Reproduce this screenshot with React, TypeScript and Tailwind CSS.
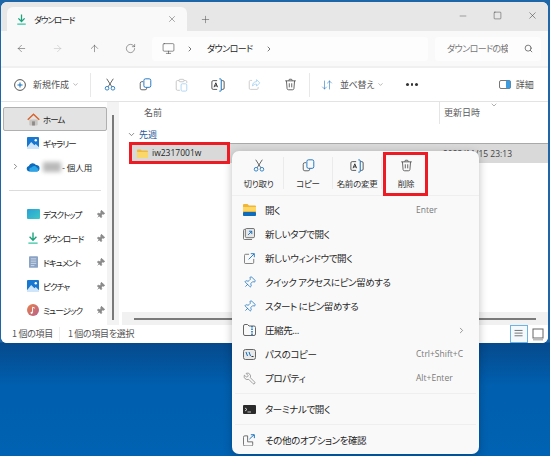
import { ArrowDownUp, ArrowLeft, ArrowRight, ArrowUp, ChevronDown, ChevronRight, Minus, Monitor, Pin, Plus, RotateCw, Search, Square, Wrench, X } from 'lucide-react'
import type { ReactNode } from 'react'

const jp = "font-['Noto_Sans_CJK_JP','Noto_Sans',sans-serif] [font-feature-settings:'palt'] whitespace-nowrap"

function ScissorsIcon({ size = 16 }: { size?: number }) {
  return (
    <svg width={size} height={size * 1.1} viewBox="0 0 16 18" fill="none" strokeWidth="1.1">
      <path d="M3.5 1 10.6 12M12.5 1 5.4 12" stroke="#444" />
      <circle cx="4" cy="14" r="2.5" stroke="#0f6cbd" />
      <circle cx="12" cy="14" r="2.5" stroke="#0f6cbd" />
    </svg>
  )
}

function CopyIcon({ size = 16 }: { size?: number }) {
  return (
    <svg width={size} height={size} viewBox="0 0 16 16" fill="none" strokeWidth="1.1">
      <path d="M5 4.5H3.5A2 2 0 0 0 1.5 6.5v6a2 2 0 0 0 2 2h4a2 2 0 0 0 2-2V12" stroke="#555" />
      <rect x="6" y="1" width="8.5" height="10.5" rx="2" stroke="#0f6cbd" />
    </svg>
  )
}

function PasteIcon() {
  return (
    <svg width="13" height="14" viewBox="0 0 16 17" fill="none" strokeWidth="1.1">
      <path d="M5 3H3a1.5 1.5 0 0 0-1.5 1.5v9A1.5 1.5 0 0 0 3 15h3" stroke="#c4c4c4" />
      <path d="M11 3h2a1.5 1.5 0 0 1 1.5 1.5V6" stroke="#c4c4c4" />
      <rect x="5" y="1.5" width="6" height="3" rx="1" stroke="#c4c4c4" />
      <rect x="7.5" y="7" width="7" height="9" rx="1.5" stroke="#a9d3f2" />
    </svg>
  )
}

function RenameIcon({ size = 16 }: { size?: number }) {
  return (
    <svg width={size} height={size} viewBox="0 0 16 16" fill="none" strokeWidth="1.1">
      <path d="M7 3H2.5a1.5 1.5 0 0 0-1.5 1.5v7A1.5 1.5 0 0 0 2.5 13H7M12 3h1.5A1.5 1.5 0 0 1 15 4.500v7a1.500 1.500 0 0 1-1.500 1.500H12" stroke="#555" />
      <path d="M3.500 10.500 5.500 5.500l2 5M4.200 9h2.600" stroke="#333" />
      <path d="M9.500 1h1.200a1 1 0 0 1 1 1v12a1 1 0 0 1-1 1H9.500" stroke="#0f6cbd" />
    </svg>
  )
}

function ShareIcon() {
  return (
    <svg width="13" height="13" viewBox="0 0 16 16" fill="none" strokeWidth="1.1">
      <path d="M5 3H3a1.500 1.500 0 0 0-1.500 1.500v8A1.500 1.500 0 0 0 3 14h8a1.500 1.500 0 0 0 1.500-1.500V11" stroke="#c8c8c8" />
      <path d="M14.500 6 10.500 2v2.500C7.500 4.500 5.500 6.500 5.500 10c1.200-2 2.800-2.500 5-2.500V10z" stroke="#a9d3f2" />
    </svg>
  )
}

function TrashIcon({ size = 16 }: { size?: number }) {
  return (
    <svg width={size} height={size} viewBox="0 0 16 16" fill="none" stroke="#555" strokeWidth="1.100">
      <path d="M1.500 3.500h13M6 3.500V2.800A1.300 1.300 0 0 1 7.300 1.500h1.400A1.300 1.300 0 0 1 10 2.800v.7" />
      <path d="M3 3.500 3.800 13a1.800 1.800 0 0 0 1.800 1.500h4.800A1.800 1.800 0 0 0 12.200 13l.8-9.500" />
      <path d="M6.500 6.500v5M9.500 6.500v5" />
    </svg>
  )
}

function DownloadIcon({ size = 13 }: { size?: number }) {
  return (
    <svg width={size} height={size} viewBox="0 0 13 13" fill="none" stroke="#1aa37a" strokeWidth="1.500">
      <path d="M6.500 .5v8M2.800 5.200l3.700 3.700 3.700-3.700" />
      <path d="M1.500 12h10" stroke="#35c5a0" />
    </svg>
  )
}

function FolderIcon({ size = 14 }: { size?: number }) {
  return (
    <svg width={size} height={size * 0.85} viewBox="0 0 14 12">
      <path d="M0 1.500A1 1 0 0 1 1 .5h3.500l1.500 1.500h7a1 1 0 0 1 1 1V11a1 1 0 0 1-1 1H1a1 1 0 0 1-1-1z" fill="#f0b93a" />
      <path d="M0 4h14v7a1 1 0 0 1-1 1H1a1 1 0 0 1-1-1z" fill="#fbd76a" />
    </svg>
  )
}

function HomeIcon() {
  return (
    <svg width="13" height="13" viewBox="0 0 14 14" fill="none">
      <path d="M2.500 7v5.500a1 1 0 0 0 1 1h7a1 1 0 0 0 1-1V7z" fill="#c9c5c2" />
      <rect x="5.500" y="9" width="3" height="4.500" fill="#8d8a88" />
      <path d="M.8 7.200 7 1.300l6.200 5.900" stroke="#d9622b" strokeWidth="1.500" />
    </svg>
  )
}

function PhotoIcon() {
  return (
    <svg width="12" height="12" viewBox="0 0 13 13">
      <rect width="13" height="13" rx="1" fill="#1878d0" />
      <path d="M0 11 4.500 5.500 8 9l1.500-1.500L13 11v2H0z" fill="#cfe6fa" />
      <circle cx="9.500" cy="3.500" r="1.300" fill="#fff" />
    </svg>
  )
}

function CloudIcon() {
  return (
    <svg width="14" height="10" viewBox="0 0 14 10">
      <path d="M3 9.500A2.800 2.800 0 0 1 2.800 4 4 4 0 0 1 10 3a3.300 3.300 0 0 1 1 6.500z" fill="#0f6cbd" />
      <path d="M5 9.500A2 2 0 0 1 5.500 5.500 3 3 0 0 1 11 6a1.900 1.900 0 0 1 .5 3.500z" fill="#2aa7e8" />
    </svg>
  )
}

function DesktopIcon() {
  return (
    <svg width="13" height="10" viewBox="0 0 13 10">
      <defs>
        <linearGradient id="dk" x1="0" y1="0" x2="1" y2="1">
          <stop offset="0" stopColor="#2a9fd6" />
          <stop offset="1" stopColor="#3ec9c4" />
        </linearGradient>
      </defs>
      <rect width="13" height="10" rx="1" fill="url(#dk)" />
    </svg>
  )
}

function DocIcon() {
  return (
    <svg width="9" height="12" viewBox="0 0 10 13">
      <rect width="10" height="13" rx="1" fill="#8aa3c4" />
      <path d="M2 3h6M2 5.500h6M2 8h6M2 10.500h4" stroke="#e4ebf5" strokeWidth=".8" />
    </svg>
  )
}

function MusicIcon() {
  return (
    <svg width="12" height="12" viewBox="0 0 13 13">
      <defs>
        <linearGradient id="mu" x1="0" y1="0" x2="1" y2="1">
          <stop offset="0" stopColor="#e8824a" />
          <stop offset="1" stopColor="#b8608e" />
        </linearGradient>
      </defs>
      <circle cx="6.500" cy="6.500" r="6.500" fill="url(#mu)" />
      <path d="M6 9.500V3.500l2.500 1" stroke="#fff" fill="none" />
      <circle cx="5" cy="9.500" r="1.200" fill="#fff" />
    </svg>
  )
}

function OpenIcon() {
  return (
    <svg width="13" height="12" viewBox="0 0 13 12">
      <path d="M0 1a1 1 0 0 1 1-1h3.500L6 1.500h6a1 1 0 0 1 1 1V11a1 1 0 0 1-1 1H1a1 1 0 0 1-1-1z" fill="#f2b632" />
      <rect y="3" width="13" height="4" fill="#fbd76a" />
      <rect y="8" width="13" height="4" rx="1" fill="#0f6cbd" />
    </svg>
  )
}

function NewTabIcon() {
  return (
    <svg width="12" height="12" viewBox="0 0 13 13" fill="none">
      <path d="M2.500 1.500H1.800A1.300 1.300 0 0 0 .5 2.800v8.400a1.300 1.300 0 0 0 1.300 1.300h8" stroke="#666" />
      <rect x="2.500" y=".5" width="10" height="10" rx="1.500" fill="#e6e6e6" stroke="#666" />
      <path d="M5.500 7.500l4-4M6.500 3.500h3v3" stroke="#0f6cbd" />
    </svg>
  )
}

function NewWindowIcon() {
  return (
    <svg width="11" height="11" viewBox="0 0 13 13" fill="none">
      <path d="M6 1.500H2A1.500 1.500 0 0 0 .5 3v8A1.500 1.500 0 0 0 2 12.500h8a1.500 1.500 0 0 0 1.500-1.500V7" stroke="#666" />
      <path d="M5.500 7.500 12 1M8 .8h4.200V5" stroke="#0f6cbd" />
    </svg>
  )
}

function PinBlue() {
  return <Pin size={13} strokeWidth={1.3} className="rotate-45 text-[#0f6cbd]" />
}

function ZipIcon() {
  return (
    <svg width="13" height="12" viewBox="0 0 13 12" fill="none">
      <path d="M.5 2A1.500 1.500 0 0 1 2 .5h2.500L6 2h5a1.500 1.500 0 0 1 1.500 1.500V10A1.500 1.500 0 0 1 11 11.500H2A1.500 1.500 0 0 1 .5 10z" stroke="#666" />
      <path d="M9 2v9.500" stroke="#0f6cbd" strokeWidth="1.500" strokeDasharray="1.500 1" />
    </svg>
  )
}

function PathIcon() {
  return (
    <svg width="13" height="11" viewBox="0 0 13 11" fill="none">
      <rect x=".5" y=".5" width="12" height="10" rx="2" fill="#e8e8e8" stroke="#666" />
      <path d="M3 3l1.500 4M6 3l1.500 4" stroke="#0f6cbd" />
      <path d="M8.500 7.500h2" stroke="#333" />
    </svg>
  )
}

function TerminalIcon() {
  return (
    <svg width="13" height="9" viewBox="0 0 13 9" fill="none">
      <rect width="13" height="9" rx="1" fill="#2b2b2b" />
      <path d="M2 3l2 1.500L2 6M4.500 7H8" stroke="#eee" strokeWidth=".8" />
    </svg>
  )
}

function MoreIcon() {
  return (
    <svg width="12" height="12" viewBox="0 0 13 13" fill="none">
      <path d="M5 2H2A1.500 1.500 0 0 0 .5 3.500v8A1.500 1.500 0 0 0 2 13h7a1.500 1.500 0 0 0 1.500-1.500V8.500H5z" stroke="#666" />
      <path d="M7 5.500 12 .8M8.500.8H12.300V4.500" stroke="#0f6cbd" />
    </svg>
  )
}

const pinned = [
  { label: 'デスクトップ', icon: <DesktopIcon /> },
  { label: 'ダウンロード', icon: <DownloadIcon size={12} /> },
  { label: 'ドキュメント', icon: <DocIcon /> },
  { label: 'ピクチャ', icon: <PhotoIcon /> },
  { label: 'ミュージック', icon: <MusicIcon /> },
]

function SideRow({ icon, children, pin }: { icon: ReactNode; children: ReactNode; pin?: boolean }) {
  return (
    <div className="flex h-6 items-center text-[8.500px] tracking-[-1px] text-[#1f1f1f]">
      <span className="flex w-[40px] justify-start pl-[23px]">
        <span className="flex w-[14px] justify-center">{icon}</span>
      </span>
      <span className="flex-1">{children}</span>
      {pin && <Pin size={9} fill="#8a8a8a" className="mr-[2px] rotate-45 text-[#8a8a8a]" />}
    </div>
  )
}

function Sidebar() {
  return (
    <div className="flex w-[106px] shrink-0 flex-col pt-[5px] pl-[2px]">
      <div className="flex h-6 items-center rounded-[2px] border border-[#b0b0b0] bg-[#e3e3e3] text-[8.500px] tracking-[-1px] text-[#1f1f1f]">
        <span className="flex w-[39px] pl-[23px]"><HomeIcon /></span>
        <span>ホーム</span>
      </div>
      <SideRow icon={<PhotoIcon />}>ギャラリー</SideRow>
      <div className="relative">
        <ChevronRight size={9} className="absolute left-[8px] top-[7px] text-[#666]" />
        <SideRow icon={<CloudIcon />}>
          <span className="flex items-center tracking-[0px]">
            <span className="mr-[1px] h-[10px] w-[18px] bg-[#b9b9b9] blur-[2px]" />
            - 個人用
          </span>
        </SideRow>
      </div>
      <div className="mx-[6px] my-[11px] h-px bg-[#dcdcdc]" />
      {pinned.map((p) => (
        <SideRow key={p.label} icon={p.icon} pin>{p.label}</SideRow>
      ))}
    </div>
  )
}

function FileArea() {
  return (
    <div className="relative flex min-w-0 flex-1 flex-col bg-white">
      <div className="flex h-[22px] shrink-0 items-center text-[9px] text-[#5a5a5a]">
        <span className="ml-[25px] w-[295px]">名前</span>
        <span className="relative flex h-full items-center border-l border-[#e5e5e5] pl-[4px]">
          <ChevronDown size={8} className="absolute left-[50px] top-[-1px] text-[#888]" />
          更新日時
        </span>
      </div>
      <div className="flex h-[19px] shrink-0 items-center pl-[8px] pt-[2px] text-[9px] text-[#1f5c99]">
        <ChevronDown size={9} className="mr-[3px] text-[#666]" />
        先週
      </div>
      <div className="ml-[12px] flex h-[20px] shrink-0 items-center border-t border-[#a9a9a9] bg-[#d9d9d9] text-[#1f1f1f]">
        <span className="ml-[6px] mr-[4px]"><FolderIcon size={11} /></span>
        <span className="w-[291px] font-['Open_Sans',sans-serif] text-[8.500px]">iw2317001w</span>
        <span className="pt-[1px] font-['Open_Sans',sans-serif] text-[8.500px] text-[#444]">2023/11/15 23:13</span>
      </div>
      <div className="flex-1" />
      <div className="ml-[3px] flex h-[13px] shrink-0 items-center bg-[#f1f1f1] px-[12px]">
        <div className="h-[2px] w-full bg-[#7a7a7a]" />
      </div>
    </div>
  )
}

const cmdItems = [
  { label: '切り取り', icon: <ScissorsIcon size={12} /> },
  { label: 'コピー', icon: <CopyIcon size={13} /> },
  { label: '名前の変更', icon: <RenameIcon size={14} /> },
  { label: '削除', icon: <TrashIcon size={13} /> },
]

const menuRows: { label: string; icon: ReactNode; right?: string; sub?: boolean }[] = [
  { label: '開く', icon: <OpenIcon />, right: 'Enter' },
  { label: '新しいタブで開く', icon: <NewTabIcon /> },
  { label: '新しいウィンドウで開く', icon: <NewWindowIcon /> },
  { label: 'クイック アクセスにピン留めする', icon: <PinBlue /> },
  { label: 'スタート にピン留めする', icon: <PinBlue /> },
  { label: '圧縮先...', icon: <ZipIcon />, sub: true },
  { label: 'パスのコピー', icon: <PathIcon />, right: 'Ctrl+Shift+C' },
  { label: 'プロパティ', icon: <Wrench size={13} strokeWidth={1} className="-scale-x-100 text-[#555]" />, right: 'Alt+Enter' },
]

function MenuRow({ icon, label, right, sub }: { icon: ReactNode; label: string; right?: string; sub?: boolean }) {
  return (
    <div className="flex h-6 items-center pr-[13px] text-[9.500px] tracking-[-0.4px] text-[#1f1f1f]">
      <span className="flex w-[33px] shrink-0 justify-end pr-[9px]">
        <span className="flex w-[14px] justify-center">{icon}</span>
      </span>
      <span className="flex-1">{label}</span>
      {right && <span className="w-[50px] font-['Open_Sans',sans-serif] text-[8.500px] tracking-normal text-[#7a7a7a]">{right}</span>}
      {sub && <ChevronRight size={9} className="text-[#777]" />}
    </div>
  )
}

function ContextMenu() {
  return (
    <div className={`${jp} absolute left-[232px] top-[151px] flex w-[247px] flex-col rounded-[7px] bg-[#f9f9f9] shadow-[0_2px_8px_rgba(0,0,0,0.25)]`}>
      <div className="flex h-[45px] items-center border-b border-[#efefef] pl-[2px]">
        {cmdItems.map((c, i) => (
          <div key={c.label} className={`flex h-[32px] w-[49px] flex-col items-center justify-between pt-[2px] text-[8.500px] tracking-[-0.3px] text-[#333] ${i > 0 ? 'border-l border-[#ebebeb]' : ''}`}>
            {c.icon}
            <span className="leading-[12px]">{c.label}</span>
          </div>
        ))}
      </div>
      <div className="flex flex-col pt-[2px]">
        {menuRows.map((r) => (
          <MenuRow key={r.label} {...r} />
        ))}
      </div>
      <div className="mx-[3px] mt-[3px] h-px bg-[#efefef]" />
      <div className="py-[3px]"><MenuRow icon={<TerminalIcon />} label="ターミナルで開く" /></div>
      <div className="mx-[3px] h-px bg-[#efefef]" />
      <div className="pt-[3px] pb-[2px]"><MenuRow icon={<MoreIcon />} label="その他のオプションを確認" /></div>
    </div>
  )
}

function TopBars() {
  return (
    <>
      <div className="flex h-[29px] shrink-0 items-end bg-[#e7e7e7] pl-[6px]">
        <div className="flex h-[24px] w-[180px] items-center rounded-t-[6px] bg-[#f9f9f9] pl-[9px] pr-[10px] text-[8.500px] tracking-[-1px] text-[#1f1f1f]">
          <DownloadIcon size={11} />
          <span className="ml-[7px] flex-1">ダウンロード</span>
          <X size={10} strokeWidth={1.100} className="text-[#444]" />
        </div>
        <Plus size={11} strokeWidth={1.200} className="mb-[6px] ml-[13px] text-[#555]" />
        <div className="mb-[10px] ml-auto flex items-center gap-[25px] pr-[10px] text-[#333]">
          <Minus size={10} strokeWidth={1} />
          <Square size={9} strokeWidth={1.200} />
          <X size={11} strokeWidth={1.100} />
        </div>
      </div>
      <div className="flex h-[37px] shrink-0 items-center border-b-[2px] border-[#f0f0f0] bg-[#f9f9f9] text-[#444]">
        <div className="flex w-[151px] items-center justify-between pl-[15px] pr-[16px]">
          <ArrowLeft size={11} strokeWidth={1.100} />
          <ArrowRight size={11} strokeWidth={1.100} className="text-[#bbb]" />
          <ArrowUp size={11} strokeWidth={1.100} />
          <RotateCw size={11} strokeWidth={1.100} />
        </div>
        <div className="flex h-[24px] w-[276px] items-center rounded-[4px] bg-[#fdfdfd] pl-[10px] text-[9px] tracking-[-0.6px] text-[#1f1f1f]">
          <Monitor size={13} strokeWidth={1.100} className="text-[#444]" />
          <ChevronRight size={8} className="ml-[11px] text-[#333]" />
          <span className="ml-[13px]">ダウンロード</span>
          <ChevronRight size={8} className="ml-[12px] text-[#333]" />
        </div>
        <div className="ml-[7px] flex h-[24px] w-[106px] items-center justify-between rounded-[4px] bg-[#fdfdfd] pl-[12px] pr-[8px] text-[9px] tracking-[-0.6px] text-[#777]">
          <span className="w-[61px] overflow-hidden">ダウンロードの検索</span>
          <Search size={9} className="text-[#555]" />
        </div>
      </div>
      <div className="flex h-[34px] shrink-0 items-center border-b border-[#e3e3e3] bg-white text-[9px] text-[#555]">
        <svg width="12" height="12" viewBox="0 0 12 12" fill="none" className="ml-[13px]">
          <circle cx="6" cy="6" r="5.400" stroke="#555" />
          <path d="M3.500 6h5M6 3.500v5" stroke="#0f6cbd" />
        </svg>
        <span className="ml-[7px]">新規作成</span>
        <ChevronDown size={7} className="ml-[3px] text-[#888]" />
        <div className="ml-[11px] h-[24px] w-px bg-[#e8e8e8]" />
        <div className="ml-[13px] flex w-[193px] items-center justify-between">
          <ScissorsIcon size={12} />
          <CopyIcon size={13} />
          <PasteIcon />
          <RenameIcon size={14} />
          <ShareIcon />
          <TrashIcon size={13} />
        </div>
        <div className="ml-[12px] h-[24px] w-px bg-[#e8e8e8]" />
        <ArrowDownUp size={12} strokeWidth={1.100} className="ml-[11px] text-[#0f6cbd]" />
        <span className="ml-[7px] tracking-[-0.3px]">並べ替え</span>
        <ChevronDown size={7} className="ml-[3px] text-[#888]" />
        <span className="ml-[22px] flex gap-[2px]">
          <span className="size-[2.500px] rounded-full bg-[#333]" />
          <span className="size-[2.500px] rounded-full bg-[#333]" />
          <span className="size-[2.500px] rounded-full bg-[#333]" />
        </span>
        <svg width="12" height="9" viewBox="0 0 12 9" fill="none" className="ml-[81px]">
          <rect x=".5" y=".5" width="11" height="8" rx="1.500" stroke="#777" />
          <rect x="7" y=".5" width="4.500" height="8" rx="1" fill="#3d9be0" />
        </svg>
        <span className="ml-[5px]">詳細</span>
      </div>
    </>
  )
}

function StatusBar() {
  return (
    <div className="flex h-[18px] shrink-0 items-center bg-white pl-[11px] text-[9px] tracking-[-0.3px] text-[#555]">
      <span>1 個の項目</span>
      <span className="ml-[6px] border-l border-[#eee] pl-[8px]">1 個の項目を選択</span>
      <div className="ml-auto mr-[3px] flex items-center gap-[4px]">
        <svg width="18" height="18" viewBox="0 0 18 18" fill="none" className="border border-[#6fb2e4] bg-[#f4f9fd]">
          <path d="M4 5h9M4 8h9M4 11h9" stroke="#666" />
        </svg>
        <svg width="13" height="13" viewBox="0 0 13 13" fill="none">
          <rect x="1" y="1" width="10" height="9" stroke="#666" />
          <path d="M1 11.500h10" stroke="#bbb" strokeWidth="2" />
        </svg>
      </div>
    </div>
  )
}

export default function App() {
  return (
    <div className="relative h-[456px] w-[550px] overflow-hidden bg-[linear-gradient(180deg,#1d66a8_0,#1d66a8_342px,#064a8c_343px,#005fae_385px,#0062b2_100%)]">
      <div className="pt-[2px] pl-[1px] pr-[2px]">
        <div className={`${jp} flex h-[341px] flex-col overflow-hidden rounded-[6px] bg-white`}>
          <TopBars />
          <div className="flex min-h-0 flex-1">
            <Sidebar />
            <div className="flex w-[12px] shrink-0 justify-center bg-[#f3f3f3] pt-[13px]">
              <div className="h-[205px] w-[2px] bg-[#7a7a7a]" />
            </div>
            <FileArea />
          </div>
          <StatusBar />
        </div>
      </div>

      <ContextMenu />
      <div className="absolute left-[129px] top-[142px] h-[22px] w-[101px] border-[3px] border-[#ed1c24]" />
      <div className="absolute left-[383px] top-[152px] h-[44px] w-[45px] border-[3px] border-[#ed1c24]" />
    </div>
  )
}
